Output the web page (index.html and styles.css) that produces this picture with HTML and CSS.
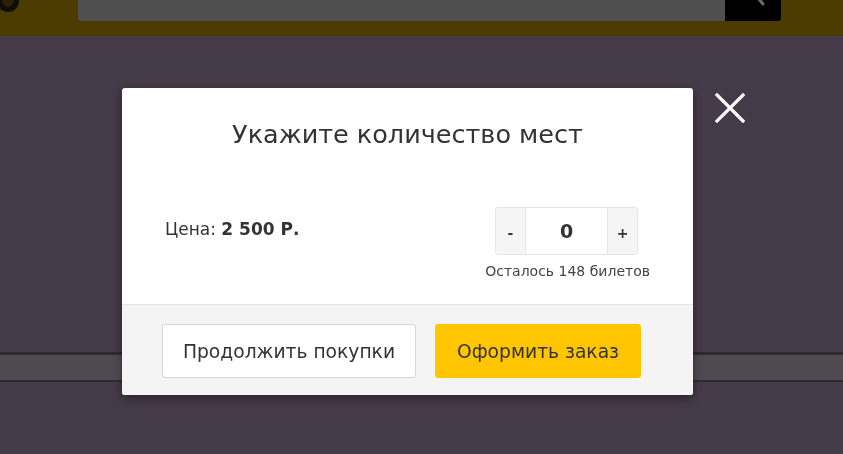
FILE: index.html
```html
<!DOCTYPE html>
<html lang="ru">
<head>
<meta charset="utf-8">
<link rel="stylesheet" href="styles.css">
</head>
<body>
<div class="page">
  <header class="header">
    <div class="logo"></div>
    <div class="search">
      <div class="search-input"></div>
      <div class="search-btn">
        <svg width="56" height="21" viewBox="0 0 56 21"><path d="M33 -2 L38 4" stroke="#6d6d6d" stroke-width="3" stroke-linecap="round"/></svg>
      </div>
    </div>
  </header>
  <main class="content">
    <div class="band"></div>
  </main>
</div>

<div class="overlay">
  <button class="close" aria-label="Закрыть">
    <svg width="30" height="30" viewBox="0 0 30 30"><path d="M2 2 L28 28 M28 2 L2 28" stroke="#fff" stroke-width="3.2" stroke-linecap="square"/></svg>
  </button>
  <div class="modal">
    <div class="modal-body">
      <h2 class="modal-title">Укажите количество мест</h2>
      <div class="modal-row">
        <div class="price">Цена: <b>2 500 Р.</b></div>
        <div class="qty">
          <div class="stepper">
            <span class="step-btn">-</span>
            <span class="step-val">0</span>
            <span class="step-btn">+</span>
          </div>
          <div class="left">Осталось 148 билетов</div>
        </div>
      </div>
    </div>
    <div class="modal-foot">
      <button class="btn btn-white">Продолжить покупки</button>
      <button class="btn btn-yellow">Оформить заказ</button>
    </div>
  </div>
</div>
</body>
</html>
```

FILE: styles.css
```css
* { box-sizing: border-box; }
html, body { margin: 0; padding: 0; }
body {
  width: 843px;
  height: 454px;
  overflow: hidden;
  font-family: "DejaVu Sans", "Noto Sans", sans-serif;
  background: #3f3740;
}
.page {
  height: 454px;
  display: flex;
  flex-direction: column;
}
.header {
  height: 36px;
  background: #4b3b00;
  display: flex;
  align-items: flex-start;
  flex: none;
}
.logo {
  width: 22px;
  height: 22px;
  margin: -10px 0 0 -3px;
  border: 5px solid #0d0d0d;
  background: #2a2000;
  border-radius: 50%;
  flex: none;
}
.search {
  display: flex;
  margin-left: 59px;
  height: 21px;
}
.search-input {
  width: 647px;
  height: 21px;
  background: #4e4f4e;
  border-radius: 0 0 0 3px;
}
.search-btn {
  width: 56px;
  height: 21px;
  background: #000;
  border-radius: 0 0 3px 0;
}
.search-btn svg { display: block; }
.content {
  flex: 1;
  background: #453a47;
  padding-top: 316px;
}
.band {
  height: 30px;
  background: #4d4b4f;
  border-top: 3px solid #2f2a31;
  border-bottom: 2px solid #2f2a31;
}

.overlay {
  position: fixed;
  inset: 0;
}
.close {
  position: absolute;
  left: 715px;
  top: 93px;
  width: 30px;
  height: 30px;
  padding: 0;
  border: 0;
  background: none;
}
.close svg { display: block; }
.modal {
  position: absolute;
  left: 122px;
  top: 88px;
  width: 571px;
  background: #fff;
  border-radius: 3px;
  overflow: hidden;
  box-shadow: 0 3px 10px rgba(0,0,0,0.4);
}
.modal-body {
  height: 217px;
  padding: 28px 43px 0 43px;
  border-bottom: 1px solid #e5e5e5;
}
.modal-title {
  margin: 0;
  text-align: center;
  font-weight: 400;
  font-size: 25.5px;
  line-height: 36px;
  color: #333;
}
.modal-row {
  display: flex;
  justify-content: space-between;
  margin-top: 55px;
}
.price {
  font-size: 17px;
  color: #333;
  margin-top: 12px;
}
.price b { font-weight: 700; }
.qty {
  display: flex;
  flex-direction: column;
  align-items: flex-end;
}
.stepper {
  display: flex;
  height: 48px;
  border: 1px solid #e6e6e6;
  border-radius: 3px;
  margin-right: 12px;
  overflow: hidden;
}
.step-btn {
  width: 29px;
  background: #f5f5f5;
  display: flex;
  align-items: center;
  justify-content: center;
  font-size: 14px;
  font-weight: 700;
  color: #333;
  padding-top: 3px;
}
.step-val {
  width: 83px;
  border-left: 1px solid #e6e6e6;
  border-right: 1px solid #e6e6e6;
  display: flex;
  align-items: center;
  justify-content: center;
  font-size: 19px;
  font-weight: 700;
  color: #333;
}
.left {
  margin-top: 8px;
  font-size: 14px;
  color: #444;
}
.modal-foot {
  height: 90px;
  background: #f4f4f4;
  display: flex;
  align-items: flex-start;
  padding: 19px 0 0 40px;
  gap: 19px;
}
.btn {
  height: 54px;
  border-radius: 3px;
  font-family: "DejaVu Sans", "Noto Sans", sans-serif;
  font-size: 18.7px;
  color: #333;
  padding: 0;
  cursor: pointer;
}
.btn-white {
  width: 254px;
  background: #fff;
  border: 1px solid #d6d6d6;
}
.btn-yellow {
  width: 206px;
  background: #ffc600;
  border: 0;
}
```
